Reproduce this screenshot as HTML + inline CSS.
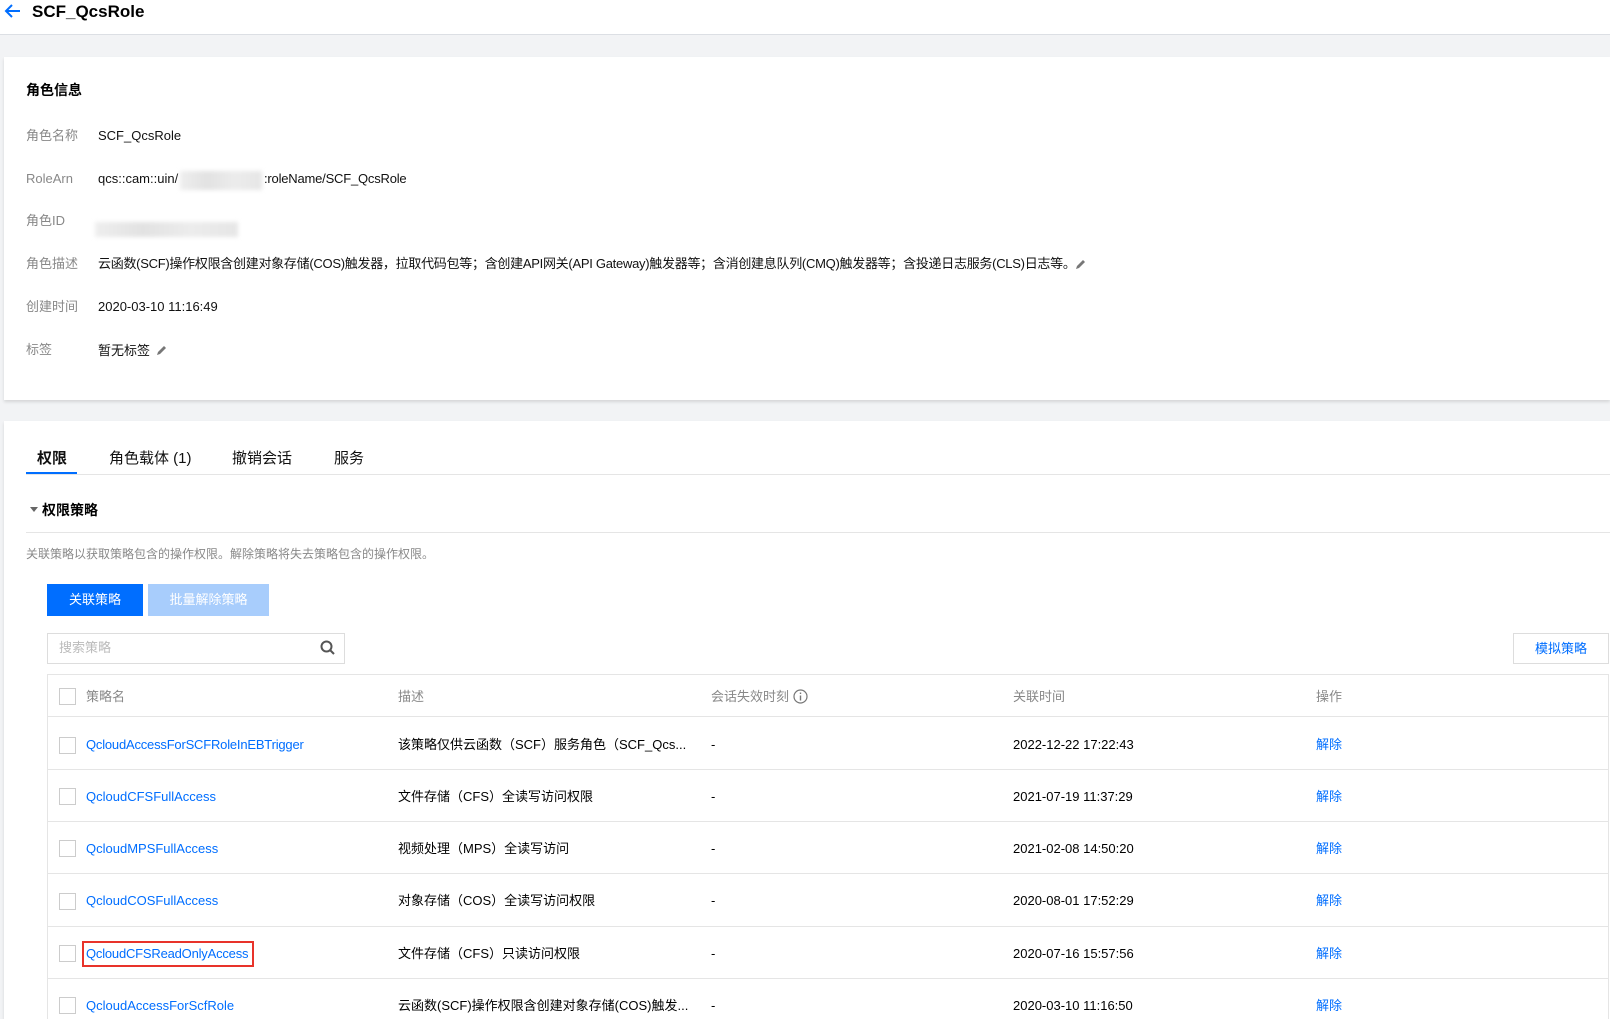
<!DOCTYPE html>
<html><head><meta charset="utf-8"><style>
*{margin:0;padding:0;box-sizing:border-box}
html{width:1610px;height:1019px;overflow:hidden}
body{width:1610px;height:1019px;overflow:hidden;background:#f2f3f5;font-family:"Liberation Sans","Noto Sans CJK SC",sans-serif;color:#000;position:relative;font-size:13px}
.a{position:absolute;white-space:nowrap;line-height:16px}
.hdr{position:absolute;left:0;top:0;width:1610px;height:35px;background:#fff;border-bottom:1px solid #dcdfe4}
.card{position:absolute;background:#fff;left:4px;width:1606px;box-shadow:0 2px 3px rgba(0,0,0,.12)}
.lbl{color:#888;font-size:13px}
.val{font-size:13px;color:#111}
.blur{position:absolute;background:linear-gradient(90deg,#eee,#e2e2e2,#ececec,#e6e6e6);filter:blur(2px)}
.tab{font-size:15px;color:#111;top:450px;line-height:18px}
.btn{position:absolute;color:#fff;font-size:13px;text-align:center;line-height:32px;height:32px}
.cb{position:absolute;width:17px;height:17px;border:1px solid #ccc;background:#fff;left:59px}
.row{position:absolute;left:47px;width:1562px;border-bottom:1px solid #e5e5e5}
.lnk{color:#006eff}
.th{color:#888;font-size:13px}
</style></head><body>
<div class="hdr"></div>
<svg class="a" style="left:4px;top:3px" width="18" height="16" viewBox="0 0 18 16"><path d="M16 8H3M8 2L2 8l6 6" fill="none" stroke="#006eff" stroke-width="2"/></svg>
<div class="a" style="left:32px;top:2px;font-size:17px;font-weight:bold;line-height:20px">SCF_QcsRole</div>

<div class="card" style="top:57px;height:343px"></div>
<div class="a" style="left:26px;top:82px;font-size:14px;font-weight:bold">角色信息</div>
<div class="a lbl" style="left:26px;top:128px">角色名称</div><div class="a val" style="left:98px;top:128px">SCF_QcsRole</div>
<div class="a lbl" style="left:26px;top:171px">RoleArn</div><div class="a val" style="left:98px;top:171px">qcs::cam::uin/</div>
<div class="blur" style="left:180px;top:171px;width:82px;height:19px"></div>
<div class="a val" style="left:264px;top:171px;letter-spacing:-0.2px">:roleName/SCF_QcsRole</div>
<div class="a lbl" style="left:26px;top:213px">角色ID</div>
<div class="blur" style="left:95px;top:222px;width:143px;height:15px"></div>
<div class="a lbl" style="left:26px;top:256px">角色描述</div><div class="a val" style="left:98px;top:256px;letter-spacing:-0.28px">云函数(SCF)操作权限含创建对象存储(COS)触发器，拉取代码包等；含创建API网关(API Gateway)触发器等；含消创建息队列(CMQ)触发器等；含投递日志服务(CLS)日志等。</div>
<svg class="a" style="left:1075px;top:258px" width="12" height="12" viewBox="0 0 12 12"><path d="M1 11l1-3 6-6 2 2-6 6z" fill="#777"/></svg>
<div class="a lbl" style="left:26px;top:299px">创建时间</div><div class="a val" style="left:98px;top:299px">2020-03-10 11:16:49</div>
<div class="a lbl" style="left:26px;top:342px">标签</div><div class="a val" style="left:98px;top:343px">暂无标签</div>
<svg class="a" style="left:156px;top:344px" width="12" height="12" viewBox="0 0 12 12"><path d="M1 11l1-3 6-6 2 2-6 6z" fill="#777"/></svg>

<div class="card" style="top:421px;height:598px"></div>
<div class="a tab" style="left:37px;font-weight:bold">权限</div>
<div class="a tab" style="left:109px">角色载体 (1)</div>
<div class="a tab" style="left:232px">撤销会话</div>
<div class="a tab" style="left:334px">服务</div>
<div class="a" style="left:26px;top:474px;width:1584px;height:1px;background:#e5e5e5"></div>
<div class="a" style="left:26px;top:472px;width:51px;height:2px;background:#006eff"></div>
<div class="a" style="left:30px;top:507px;width:0;height:0;border-left:4px solid transparent;border-right:4px solid transparent;border-top:5px solid #666"></div>
<div class="a" style="left:42px;top:502px;font-size:14px;font-weight:bold">权限策略</div>
<div class="a" style="left:26px;top:532px;width:1584px;height:1px;background:#e5e5e5"></div>
<div class="a" style="left:26px;top:546px;font-size:12px;color:#888">关联策略以获取策略包含的操作权限。解除策略将失去策略包含的操作权限。</div>
<div class="btn" style="left:47px;top:584px;width:96px;background:#006eff">关联策略</div>
<div class="btn" style="left:148px;top:584px;width:121px;background:#a8cdfc">批量解除策略</div>
<div class="a" style="left:47px;top:633px;width:298px;height:31px;border:1px solid #ddd;background:#fff"></div>
<div class="a" style="left:59px;top:640px;color:#bbb;font-size:13px">搜索策略</div>
<svg class="a" style="left:320px;top:640px" width="16" height="16" viewBox="0 0 16 16"><circle cx="6.5" cy="6.5" r="5" fill="none" stroke="#555" stroke-width="2"/><path d="M10 10l4 4" stroke="#555" stroke-width="2"/></svg>
<div class="a" style="left:1513px;top:633px;width:96px;height:31px;border:1px solid #ddd;background:#fff;color:#006eff;text-align:center;line-height:29px">模拟策略</div>

<div class="a" style="left:47px;top:674px;width:1562px;height:345px;border:1px solid #e5e5e5;border-bottom:none;background:#fff"></div>
<div class="row" style="top:674px;height:43px"></div>
<div class="cb" style="top:688px"></div>
<div class="a th" style="left:86px;top:689px">策略名</div>
<div class="a th" style="left:398px;top:689px">描述</div>
<div class="a th" style="left:711px;top:689px">会话失效时刻</div>
<svg class="a" style="left:793px;top:689px" width="15" height="15" viewBox="0 0 15 15"><circle cx="7.5" cy="7.5" r="6.5" fill="none" stroke="#777" stroke-width="1.2"/><path d="M7.5 6.5v5M7.5 3.5v1.5" stroke="#777" stroke-width="1.4"/></svg>
<div class="a th" style="left:1013px;top:689px">关联时间</div>
<div class="a th" style="left:1316px;top:689px">操作</div>

<div class="row" style="top:717px;height:53px"></div>
<div class="cb" style="top:737px"></div>
<div class="a lnk" style="left:86px;top:737px;letter-spacing:-0.2px">QcloudAccessForSCFRoleInEBTrigger</div>
<div class="a" style="left:398px;top:737px">该策略仅供云函数（SCF）服务角色（SCF_Qcs...</div>
<div class="a" style="left:711px;top:737px">-</div>
<div class="a" style="left:1013px;top:737px">2022-12-22 17:22:43</div>
<div class="a lnk" style="left:1316px;top:737px">解除</div>

<div class="row" style="top:770px;height:52px"></div>
<div class="cb" style="top:788px"></div>
<div class="a lnk" style="left:86px;top:789px">QcloudCFSFullAccess</div>
<div class="a" style="left:398px;top:789px">文件存储（CFS）全读写访问权限</div>
<div class="a" style="left:711px;top:789px">-</div>
<div class="a" style="left:1013px;top:789px">2021-07-19 11:37:29</div>
<div class="a lnk" style="left:1316px;top:789px">解除</div>

<div class="row" style="top:822px;height:52px"></div>
<div class="cb" style="top:840px"></div>
<div class="a lnk" style="left:86px;top:841px">QcloudMPSFullAccess</div>
<div class="a" style="left:398px;top:841px">视频处理（MPS）全读写访问</div>
<div class="a" style="left:711px;top:841px">-</div>
<div class="a" style="left:1013px;top:841px">2021-02-08 14:50:20</div>
<div class="a lnk" style="left:1316px;top:841px">解除</div>

<div class="row" style="top:874px;height:53px"></div>
<div class="cb" style="top:893px"></div>
<div class="a lnk" style="left:86px;top:893px">QcloudCOSFullAccess</div>
<div class="a" style="left:398px;top:893px">对象存储（COS）全读写访问权限</div>
<div class="a" style="left:711px;top:893px">-</div>
<div class="a" style="left:1013px;top:893px">2020-08-01 17:52:29</div>
<div class="a lnk" style="left:1316px;top:893px">解除</div>

<div class="row" style="top:927px;height:52px"></div>
<div class="cb" style="top:945px"></div>
<div class="a" style="left:82px;top:941px;width:172px;height:26px;border:2px solid #e8332a"></div>
<div class="a lnk" style="left:86px;top:946px;letter-spacing:-0.2px">QcloudCFSReadOnlyAccess</div>
<div class="a" style="left:398px;top:946px">文件存储（CFS）只读访问权限</div>
<div class="a" style="left:711px;top:946px">-</div>
<div class="a" style="left:1013px;top:946px">2020-07-16 15:57:56</div>
<div class="a lnk" style="left:1316px;top:946px">解除</div>

<div class="cb" style="top:997px"></div>
<div class="a lnk" style="left:86px;top:998px">QcloudAccessForScfRole</div>
<div class="a" style="left:398px;top:998px">云函数(SCF)操作权限含创建对象存储(COS)触发...</div>
<div class="a" style="left:711px;top:998px">-</div>
<div class="a" style="left:1013px;top:998px">2020-03-10 11:16:50</div>
<div class="a lnk" style="left:1316px;top:998px">解除</div>
</body></html>
